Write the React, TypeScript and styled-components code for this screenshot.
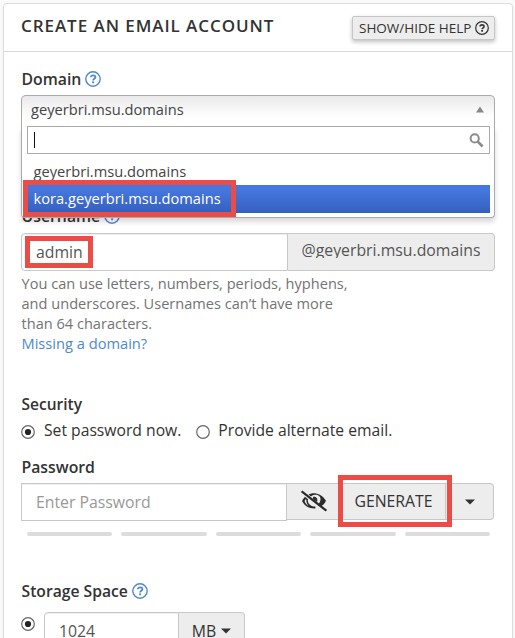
import React from 'react';
import styled, { createGlobalStyle, css } from 'styled-components';

const GlobalStyle = createGlobalStyle`
  * { box-sizing: border-box; }
  html, body { margin: 0; background: #fafafa; }
  body { font-family: "Open Sans", sans-serif; font-size: 15.8px; color: #333; }
`;

const Page = styled.div`
  height: 638px;
  padding: 3px 0 0 3px;
  overflow: hidden;
`;

const Panel = styled.section`
  width: 510px;
  height: 660px;
  background: #fff;
  border: 1px solid #ddd;
  border-radius: 4px;
  box-shadow: 0 1px 2px rgba(0, 0, 0, 0.08);
`;

const Header = styled.header`
  display: flex;
  justify-content: space-between;
  align-items: flex-start;
  height: 48px;
  padding: 12px 17px 0 17px;
  border-bottom: 1px solid #d8d8d8;
`;

const Title = styled.h1`
  margin: 0;
  font-size: 17px;
  font-weight: 550;
  line-height: 20px;
  letter-spacing: 0.94px;
  white-space: nowrap;
`;

const HelpToggle = styled.button`
  display: flex;
  align-items: center;
  gap: 4px;
  width: 143px;
  height: 24px;
  padding: 0 0 0 6px;
  font: 400 13.5px/20px "Open Sans", sans-serif;
  color: #333;
  white-space: nowrap;
  background: #ededed;
  border: 1px solid #c6c6c6;
  border-radius: 2px;
  box-shadow: 0 2px 4px rgba(0, 0, 0, 0.25);
`;

const Form = styled.div`
  padding: 16px 17px 0 17px;
`;

const Field = styled.div<{ $before?: number }>`
  margin-top: ${(p) => p.$before ?? 0}px;
`;

const Label = styled.div<{ $size?: number; $after?: number }>`
  display: flex;
  align-items: center;
  gap: 4px;
  height: 22px;
  margin-bottom: ${(p) => p.$after ?? 5}px;
  padding-left: 0.5px;
  font-size: ${(p) => p.$size ?? 15.8}px;
  font-weight: 600;
  line-height: 22px;
`;

const Select = styled.div`
  position: relative;
  height: 31px;
  font-size: 14.65px;
  color: #444;
`;

const Selected = styled.div`
  display: flex;
  justify-content: space-between;
  height: 31px;
  padding: 0 10px 0 9px;
  line-height: 27px;
  border: 1px solid #aaa;
  border-bottom: 0;
  border-radius: 5px 5px 0 0;
  background: linear-gradient(#e9e9e9, #fff 70%);
`;

const UpArrow = styled.svg`
  margin-top: 10px;
`;

const Menu = styled.div`
  position: absolute;
  z-index: 1;
  top: 31px;
  left: 0;
  right: 0;
  height: 92px;
  padding: 0 4px 0 5px;
  background: #fff;
  border: 1px solid #aaa;
  border-top: 0;
  border-radius: 0 0 4px 4px;
  box-shadow: 0 4px 5px rgba(0, 0, 0, 0.15);
`;

const SearchBox = styled.div`
  display: flex;
  align-items: center;
  justify-content: space-between;
  height: 28px;
  padding: 0 5px 0 6px;
  border: 1px solid #aaa;
`;

const Caret = styled.span`
  width: 1px;
  height: 16px;
  background: #111;
`;

const Options = styled.div`
  padding-top: 4px;
`;

const Option = styled.div<{ $active?: boolean }>`
  height: 28px;
  padding-left: 6.5px;
  line-height: 27px;
  overflow: hidden;
  ${(p) =>
    p.$active &&
    css`
      margin-left: 1px;
      margin-top: -1px;
      padding-left: 5.5px;
      color: #fff;
      background: linear-gradient(#4578df 15%, #355fbe);
    `}
`;

const Highlight = styled.div<{ $x: number; $y: number; $w: number; $h: number }>`
  position: absolute;
  z-index: 2;
  left: ${(p) => p.$x}px;
  top: ${(p) => p.$y}px;
  width: ${(p) => p.$w}px;
  height: ${(p) => p.$h}px;
  border: 5px solid #eb4c46;
  pointer-events: none;
`;

const InputRow = styled.div`
  position: relative;
  display: flex;
  align-items: flex-start;
  height: 38px;
`;

const Input = styled.div<{ $width: number; $round?: boolean; $muted?: boolean }>`
  width: ${(p) => p.$width}px;
  height: 38px;
  padding-left: 14px;
  font-size: 15.8px;
  line-height: 37px;
  color: ${(p) => (p.$muted ? '#999' : '#555')};
  background: #fff;
  border: 1px solid #c8c8c8;
  border-radius: ${(p) => (p.$round ? '4px 0 0 4px' : '0')};
  box-shadow: inset 0 1px 1px rgba(0, 0, 0, 0.07);
`;

const Addon = styled.div<{ $width: number; $height?: number; $last?: boolean }>`
  display: flex;
  align-items: center;
  justify-content: center;
  gap: 5px;
  width: ${(p) => p.$width}px;
  height: ${(p) => p.$height ?? 37}px;
  white-space: nowrap;
  background: #ededed;
  border: 1px solid #c8c8c8;
  border-left-width: 0;
  border-radius: ${(p) => (p.$last ? '0 4px 4px 0' : '0')};
`;

/* Suffix whose descenders are clipped by the tight line box. */
const Suffix = styled.span`
  height: 19px;
  margin-top: -7px;
  line-height: 22px;
  overflow: hidden;
  color: #555;
`;

const Raised = styled.span`
  margin: -2px 0 0 2px;
`;

const HelpText = styled.p`
  margin: 2px 0 0;
  padding-left: 0.5px;
  width: 345px;
  font-size: 14.58px;
  line-height: 20px;
  color: #737373;
`;

const HelpLink = styled.a`
  display: block;
  font-size: 14.65px;
  color: #4f88ce;
`;

const RadioRow = styled.div`
  display: flex;
  height: 22px;
  font-size: 15.7px;
  line-height: 22px;
`;

const Choice = styled.label<{ $before?: number; $gap: number }>`
  display: flex;
  gap: ${(p) => p.$gap}px;
  margin-left: ${(p) => p.$before ?? 0}px;
  white-space: nowrap;
`;

const Dial = styled.svg<{ $drop: number }>`
  flex: none;
  margin-top: ${(p) => p.$drop}px;
`;

const Meter = styled.div`
  display: grid;
  grid-template-columns: repeat(5, 1fr);
  gap: 9px;
  margin: 11px 5px 0 6px;
`;

const MeterBar = styled.span`
  height: 4px;
  border-radius: 2px;
  background: #dcdcdc;
`;

const StorageRow = styled.div`
  display: flex;
  gap: 9px;
`;

const QuestionIcon = ({ size, color }: { size: number; color: string }) => (
  <svg width={size} height={size} viewBox="0 0 16 16" fill="none" stroke={color}>
    <circle cx="8" cy="8" r="7.2" strokeWidth="1.4" />
    <path d="M5.8 6.3C5.8 3.7 10.4 3.8 10.4 6.3C10.4 7.8 8.1 7.8 8.1 9.5" strokeWidth="1.8" />
    <path d="M8.1 10.4V12.2" strokeWidth="2" />
  </svg>
);

const SearchIcon = () => (
  <svg width="15" height="15" viewBox="0 0 15 15" fill="none" stroke="#8b8b8b">
    <circle cx="5.7" cy="5.4" r="4.1" strokeWidth="2" />
    <path d="M8.8 8.6L13.6 13.5" strokeWidth="2.7" />
  </svg>
);

const EyeShape = styled.svg`
  margin: -1px 0 0 2px;
`;

const EyeOffIcon = () => (
  <EyeShape width="26" height="22" viewBox="0 0 26 22" fill="none" stroke="#2b2b2b">
    <path d="M7.6 4.6C11 2.2 20 2 25 10.8C23.6 13.6 22 15.2 20.4 16.2L17.6 14C20.4 11 20.2 6.6 17 5.2C14 4.2 11.8 4.8 10 6.4Z" fill="#2b2b2b" stroke="none" />
    <path d="M4 6.8C2.8 8 1.9 9.4 1 11C4 16.8 9 18.8 14.4 18.4V16.6C9.6 16.8 6 12.8 7 9.2Z" fill="#2b2b2b" stroke="none" />
    <path d="M4.6 9.2C3.6 10 3.5 11.2 4 12.2C4.8 13.8 6 15 7.4 15.8C5.8 13.8 5.2 11.6 5.4 9.8Z" fill="#ededed" stroke="none" />
    <path d="M12 7C15.2 6 17.2 9 16 12L12 9Z" fill="#2b2b2b" stroke="none" />
    <path d="M.6 1.3L25.4 20.7" strokeWidth="2.3" />
  </EyeShape>
);

const DownArrow = () => (
  <svg width="10" height="6" viewBox="0 0 10 6">
    <path d="M0 .5H10L5 5.5Z" fill="#333" />
  </svg>
);

const Radio = ({ on, drop }: { on?: boolean; drop: number }) => (
  <Dial $drop={drop} width="14" height="14" viewBox="0 0 14 14">
    <circle cx="7" cy="7" r="6.3" fill="#fff" stroke="#666" strokeWidth="1.2" />
    {on && <circle cx="7" cy="7" r="3.1" fill="#222" />}
  </Dial>
);

export default function App() {
  return (
    <>
      <GlobalStyle />
      <Page>
        <Panel>
          <Header>
            <Title>CREATE AN EMAIL ACCOUNT</Title>
            <HelpToggle>
              SHOW/HIDE HELP
              <QuestionIcon size={14} color="#333" />
            </HelpToggle>
          </Header>
          <Form>
            <Field>
              <Label>
                Domain
                <QuestionIcon size={16} color="#4f88ce" />
              </Label>
              <Select>
                <Selected>
                  geyerbri.msu.domains
                  <UpArrow width="8" height="7" viewBox="0 0 8 7">
                    <path d="M4 .5L8 6.5H0Z" fill="#888" />
                  </UpArrow>
                </Selected>
                <Menu>
                  <SearchBox>
                    <Caret />
                    <SearchIcon />
                  </SearchBox>
                  <Options>
                    <Option>geyerbri.msu.domains</Option>
                    <Option $active>kora.geyerbri.msu.domains</Option>
                  </Options>
                </Menu>
                <Highlight $x={2} $y={85} $w={213} $h={37} />
              </Select>
            </Field>
            <Field $before={79}>
              <Label $after={6}>
                Username
                <QuestionIcon size={16} color="#4f88ce" />
              </Label>
              <InputRow>
                <Input $width={267} $round>admin</Input>
                <Addon $width={207} $height={38} $last>
                  <Suffix>@geyerbri.msu.domains</Suffix>
                </Addon>
                <Highlight $x={4} $y={3} $w={68} $h={32} />
              </InputRow>
              <HelpText>
                You can use letters, numbers, periods, hyphens,
                <br />
                and underscores. Usernames can’t have more
                <br />
                than 64 characters.
                <HelpLink>Missing a domain?</HelpLink>
              </HelpText>
            </Field>
            <Field $before={40}>
              <Label $size={15.5} $after={4}>Security</Label>
              <RadioRow>
                <Choice $gap={9}>
                  <Radio on drop={6} />
                  Set password now.
                </Choice>
                <Choice $gap={8} $before={15}>
                  <Radio drop={6} />
                  Provide alternate email.
                </Choice>
              </RadioRow>
            </Field>
            <Field $before={15}>
              <Label>Password</Label>
              <InputRow>
                <Input $width={266} $muted>Enter Password</Input>
                <Addon $width={53}>
                  <EyeOffIcon />
                </Addon>
                <Addon $width={106}>
                  <Raised>GENERATE</Raised>
                </Addon>
                <Addon $width={48} $last>
                  <DownArrow />
                </Addon>
                <Highlight $x={317} $y={-8} $w={114} $h={52} />
              </InputRow>
              <Meter>
                {[1, 2, 3, 4, 5].map((n) => (
                  <MeterBar key={n} />
                ))}
              </Meter>
            </Field>
            <Field $before={44}>
              <Label $size={15.7} $after={10}>
                Storage Space
                <QuestionIcon size={16} color="#4f88ce" />
              </Label>
              <StorageRow>
                <Radio on drop={5} />
                <InputRow>
                  <Input $width={135} $round>1024</Input>
                  <Addon $width={66} $height={38} $last>
                    MB
                    <DownArrow />
                  </Addon>
                </InputRow>
              </StorageRow>
            </Field>
          </Form>
        </Panel>
      </Page>
    </>
  );
}
